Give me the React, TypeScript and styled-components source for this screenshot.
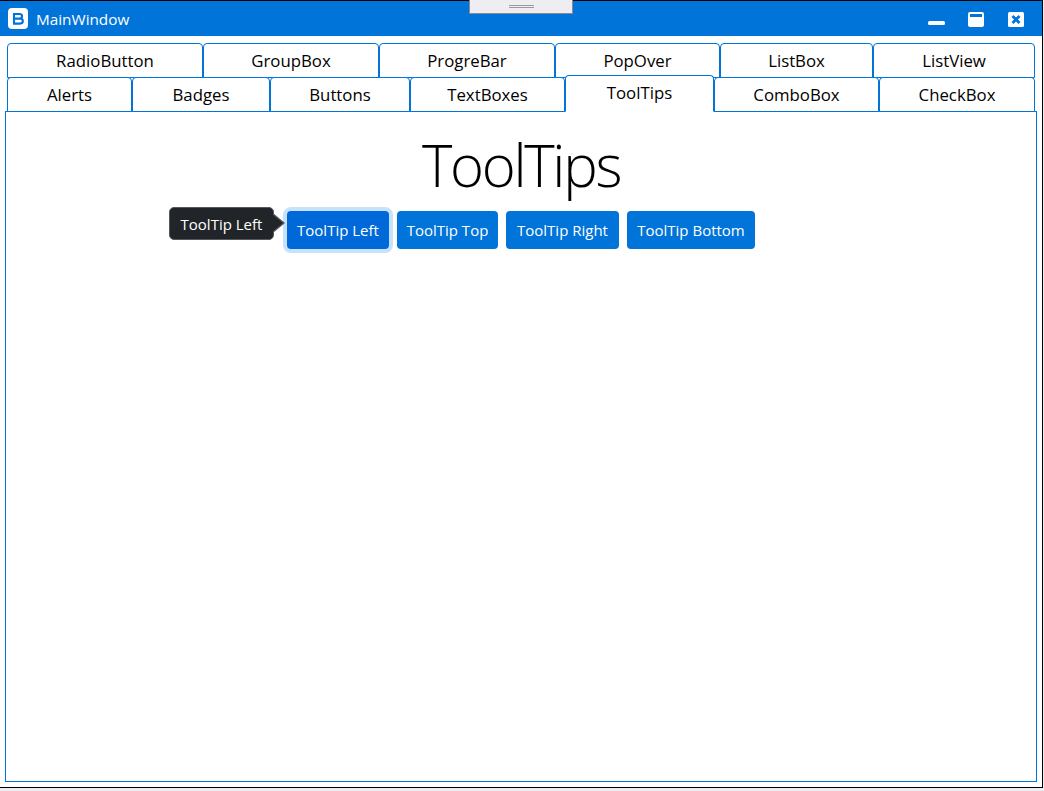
import { createGlobalStyle, styled } from "styled-components";

const GlobalStyle = createGlobalStyle`
    html, body {
        margin: 0;
        padding: 0;
        background: #eeeef2;
    }
    * {
        box-sizing: border-box;
    }
`;

const Window = styled.div`
    position: relative;
    display: flex;
    flex-direction: column;
    width: 1043px;
    height: 788px;
    background: #ffffff;
    border-top: 1px solid #000000;
    border-right: 1px solid #000000;
    border-bottom: 1px solid #000000;
    font-family: "Open Sans", "Noto Sans", sans-serif;
`;

const TitleBar = styled.div`
    display: flex;
    align-items: center;
    height: 35px;
    padding-left: 8px;
    background: #0074d9;
    color: #ffffff;
`;

const Logo = styled.svg`
    display: block;
    width: 20px;
    height: 21px;
`;

const WindowTitle = styled.span`
    margin-left: 8px;
    font-size: 15.3px;
`;

const Controls = styled.div`
    display: flex;
    align-items: center;
    margin-left: auto;
    padding-right: 17px;
    gap: 23px;
`;

const ControlIcon = styled.svg`
    display: block;
    width: 17px;
    height: 16px;
`;

const DragHandle = styled.div`
    position: absolute;
    top: -1px;
    left: 469px;
    display: flex;
    align-items: center;
    justify-content: center;
    width: 104px;
    height: 14px;
    background: #eeeef2;
    border: 1px solid #8a8a8a;
    border-top: none;
`;

const Grip = styled.div`
    width: 25px;
    height: 3px;
    border-top: 1px solid #9a9a9a;
    border-bottom: 1px solid #9a9a9a;
`;

const TabStrip = styled.div`
    display: flex;
    flex-direction: column;
    margin-top: 7px;
    padding: 0 7px;
`;

const TabRow = styled.div`
    display: flex;
    height: 34px;
    align-items: flex-end;
`;

const Tab = styled.div<{ $width: number; $selected?: boolean }>`
    position: relative;
    z-index: ${(p) => (p.$selected ? 2 : 1)};
    display: flex;
    align-items: center;
    justify-content: center;
    width: ${(p) => p.$width}px;
    height: ${(p) => (p.$selected ? 37 : 35)}px;
    margin-bottom: -1px;
    padding-bottom: ${(p) => (p.$selected ? 2 : 0)}px;
    background: #ffffff;
    border: 1px solid #0074d9;
    border-bottom-color: ${(p) => (p.$selected ? "#ffffff" : "#0074d9")};
    border-radius: 4px 4px 0 0;
    color: #000000;
    font-size: 16.8px;
`;

const ContentPanel = styled.div`
    display: flex;
    flex-direction: column;
    align-items: center;
    width: 1032px;
    height: 671px;
    margin-left: 5px;
    border: 1px solid #0074d9;
`;

const Heading = styled.h1`
    margin: 15px 0 0;
    height: 84px;
    color: #000000;
    font-size: 58px;
    font-weight: 300;
    letter-spacing: -2.3px;
    line-height: 76px;
`;

const ButtonRow = styled.div`
    position: relative;
    display: flex;
    align-self: flex-start;
    gap: 8px;
    margin-left: 281px;
`;

const Button = styled.div<{ $width: number; $focused?: boolean }>`
    display: flex;
    align-items: center;
    justify-content: center;
    width: ${(p) => p.$width}px;
    height: 38px;
    background: ${(p) => (p.$focused ? "#0069d9" : "#0074d9")};
    border-radius: 4px;
    box-shadow: ${(p) => (p.$focused ? "0 0 0 4px #c6e2fc" : "none")};
    color: #ffffff;
    font-size: 15px;
`;

const Tooltip = styled.div`
    position: absolute;
    top: -4px;
    left: -118px;
    display: flex;
    align-items: center;
    justify-content: center;
    width: 105px;
    height: 33px;
    padding-top: 1px;
    background: #212529;
    border: 1px solid #55585c;
    border-radius: 5px;
    color: #ffffff;
    font-size: 15px;

    &::before {
        content: "";
        position: absolute;
        top: 5px;
        left: 100%;
        border-top: 10px solid transparent;
        border-bottom: 10px solid transparent;
        border-left: 12px solid #55585c;
    }

    &::after {
        content: "";
        position: absolute;
        top: 6px;
        left: 100%;
        margin-left: -1px;
        border-top: 9px solid transparent;
        border-bottom: 9px solid transparent;
        border-left: 11px solid #212529;
    }
`;

const topTabs = [
    { label: "RadioButton", width: 196 },
    { label: "GroupBox", width: 176 },
    { label: "ProgreBar", width: 176 },
    { label: "PopOver", width: 165 },
    { label: "ListBox", width: 153 },
    { label: "ListView", width: 162 },
];

const bottomTabs = [
    { label: "Alerts", width: 125 },
    { label: "Badges", width: 138 },
    { label: "Buttons", width: 140 },
    { label: "TextBoxes", width: 155 },
    { label: "ToolTips", width: 149, selected: true },
    { label: "ComboBox", width: 165 },
    { label: "CheckBox", width: 156 },
];

const buttons = [
    { label: "ToolTip Left", width: 102, focused: true },
    { label: "ToolTip Top", width: 101 },
    { label: "ToolTip Right", width: 113 },
    { label: "ToolTip Bottom", width: 128 },
];

export default function App() {
    return (
        <>
            <GlobalStyle />
            <Window>
                <TitleBar>
                    <Logo viewBox="0 0 20 21">
                        <rect width="20" height="21" rx="4" fill="#fff" />
                        <path
                            d="M6 6 H11.5 C14.9 6 14.9 10.6 11.5 10.6 H6 Z M6 10.6 H12 C15.8 10.6 15.8 15.6 12 15.6 H6 Z"
                            fill="none"
                            stroke="#0074d9"
                            strokeWidth="2.1"
                        />
                    </Logo>
                    <WindowTitle>MainWindow</WindowTitle>
                    <Controls>
                        <ControlIcon viewBox="0 0 17 16">
                            <rect x="0" y="10" width="17" height="4" rx="1.5" fill="#fff" />
                        </ControlIcon>
                        <ControlIcon viewBox="0 0 17 16">
                            <rect x="0" y="1" width="16" height="15" rx="2" fill="#fff" />
                            <rect x="2" y="3" width="12" height="3" fill="#0074d9" />
                        </ControlIcon>
                        <ControlIcon viewBox="0 0 17 16">
                            <rect x="0" y="1" width="16" height="15" rx="1.5" fill="#fff" />
                            <path d="M4.5 5 L11.5 12 M11.5 5 L4.5 12" stroke="#0074d9" strokeWidth="2.8" />
                        </ControlIcon>
                    </Controls>
                </TitleBar>
                <DragHandle>
                    <Grip />
                </DragHandle>
                <TabStrip>
                    <TabRow>
                        {topTabs.map((tab) => (
                            <Tab key={tab.label} $width={tab.width}>
                                {tab.label}
                            </Tab>
                        ))}
                    </TabRow>
                    <TabRow>
                        {bottomTabs.map((tab) => (
                            <Tab key={tab.label} $width={tab.width} $selected={tab.selected}>
                                {tab.label}
                            </Tab>
                        ))}
                    </TabRow>
                </TabStrip>
                <ContentPanel>
                    <Heading>ToolTips</Heading>
                    <ButtonRow>
                        <Tooltip>ToolTip Left</Tooltip>
                        {buttons.map((button) => (
                            <Button key={button.label} $width={button.width} $focused={button.focused}>
                                {button.label}
                            </Button>
                        ))}
                    </ButtonRow>
                </ContentPanel>
            </Window>
        </>
    );
}
